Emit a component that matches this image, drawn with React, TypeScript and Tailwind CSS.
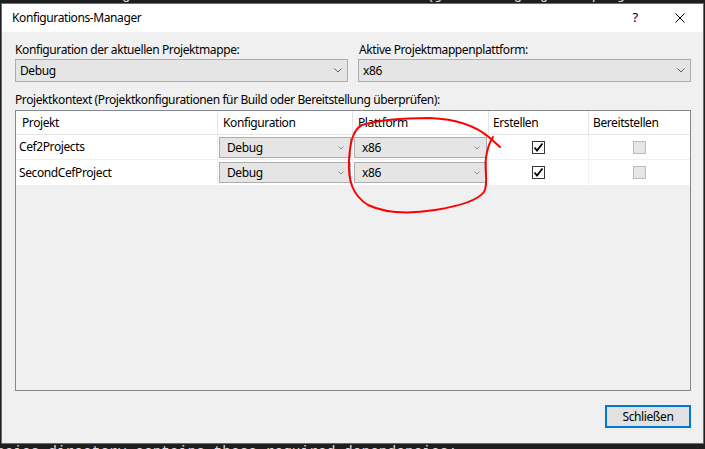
import React from "react";

const ui = { fontFamily: '"Noto Sans", "Open Sans", sans-serif', letterSpacing: "-0.4px" };
const mono = { fontFamily: '"Liberation Mono", "DejaVu Sans Mono", monospace', letterSpacing: "0px" };

function Chevron({ color = "#606060", w = 8 }: { color?: string; w?: number }) {
  return (
    <svg width={w} height={5} viewBox="0 0 8 5" className="shrink-0">
      <polyline points="0.5,0.5 4,4 7.5,0.5" fill="none" stroke={color} strokeWidth="1" />
    </svg>
  );
}

function Combo({ text, className }: { text: string; className?: string }) {
  return (
    <div
      className={
        "flex items-center justify-between border border-[#adadad] bg-[#e5e5e5] pl-[4px] pr-[5px] text-[12px] text-black " +
        (className ?? "")
      }
    >
      <span>{text}</span>
      <Chevron />
    </div>
  );
}

function RowCombo({ text }: { text: string }) {
  return (
    <div className="mx-[1px] my-[2px] flex h-[21px] items-center justify-between border border-[#adadad] bg-[#e5e5e5] pl-[7px] pr-[6px] text-[12px] text-black">
      <span>{text}</span>
      <svg width="6" height="4" viewBox="0 0 6 4">
        <polyline points="0.5,0.5 3,3 5.5,0.5" fill="none" stroke="#8a8a8a" strokeWidth="1" />
      </svg>
    </div>
  );
}

function Check({ checked, disabled }: { checked?: boolean; disabled?: boolean }) {
  return (
    <div
      className={
        "flex h-[13px] w-[13px] items-center justify-center border " +
        (disabled ? "border-[#bcbcbc] bg-[#e6e6e6]" : "border-[#333333] bg-white")
      }
    >
      {checked && (
        <svg width="11" height="11" viewBox="0 0 11 11">
          <polyline points="1.5,5.5 4,8.5 9.5,1.5" fill="none" stroke="#000" strokeWidth="1.8" />
        </svg>
      )}
    </div>
  );
}

function Row({ name, last }: { name: string; last?: boolean }) {
  return (
    <div className={"flex h-[25px] bg-white " + (last ? "" : "border-b border-[#f0f0f0]")}>
      <div className="flex w-[202px] items-center border-r border-[#f0f0f0] pl-[3px] text-[12px] text-black">
        {name}
      </div>
      <div className="w-[135px] border-r border-[#f0f0f0]">
        <RowCombo text="Debug" />
      </div>
      <div className="w-[136px] border-r border-[#f0f0f0]">
        <RowCombo text="x86" />
      </div>
      <div className="flex w-[100px] items-center justify-center border-r border-[#f0f0f0]">
        <Check checked />
      </div>
      <div className="flex flex-1 items-center justify-center">
        <Check disabled />
      </div>
    </div>
  );
}

export default function App() {
  return (
    <div className="relative h-[449px] w-[705px] overflow-hidden bg-[#1e1e1e]" style={ui}>
      <div className="h-[3px] overflow-hidden">
        <div className="-mt-[13px] whitespace-nowrap text-[14.5px] leading-[16px] text-[#dcdcdc]" style={mono}>
          r solution target architecture to "x86" or "x64" (just changing the project b
        </div>
      </div>
      <div className="ml-[1px] flex h-[441px] w-[703px] flex-col border border-[#1883d7] bg-[#f0f0f0]">
        <div className="flex h-[28px] items-center bg-white pl-[10px] text-[12px] text-black">
          <span className="flex-1">Konfigurations-Manager</span>
          <span className="w-[10px] text-center text-[13px]">?</span>
          <span className="ml-[35px] mr-[18px] flex w-[10px] items-center justify-center">
            <svg width="10" height="10" viewBox="0 0 10 10">
              <path d="M0.5 0.5 L9.5 9.5 M9.5 0.5 L0.5 9.5" stroke="#000" strokeWidth="1" />
            </svg>
          </span>
        </div>
        <div className="flex flex-1 flex-col pl-[13px] pr-[12px] pt-[10px] text-[12px] text-black">
          <div className="flex gap-[10px]">
            <div className="flex w-[333px] flex-col gap-[1px]">
              <div className="h-[16px] leading-[16px]">Konfiguration der aktuellen Projektmappe:</div>
              <Combo text="Debug" className="h-[23px]" />
            </div>
            <div className="flex flex-1 flex-col gap-[1px]">
              <div className="h-[16px] pl-[1px] leading-[16px]">Aktive Projektmappenplattform:</div>
              <Combo text="x86" className="h-[23px]" />
            </div>
          </div>
          <div className="mt-[10px] h-[16px] leading-[16px]">
            Projektkontext (Projektkonfigurationen für Build oder Bereitstellung überprüfen):
          </div>
          <div className="mt-[2px] flex h-[281px] flex-col border border-[#828790] bg-[#f0f0f0]">
            <div className="flex h-[24px] border-b border-[#e5e5e5] bg-white">
              <div className="flex w-[202px] items-center border-r border-[#e5e5e5] pl-[6px]">Projekt</div>
              <div className="flex w-[135px] items-center border-r border-[#e5e5e5] pl-[5px]">Konfiguration</div>
              <div className="flex w-[136px] items-center border-r border-[#e5e5e5] pl-[5px]">Plattform</div>
              <div className="flex w-[100px] items-center border-r border-[#e5e5e5] pl-[4px]">Erstellen</div>
              <div className="flex flex-1 items-center pl-[4px]">Bereitstellen</div>
            </div>
            <Row name="Cef2Projects" />
            <Row name="SecondCefProject" last />
          </div>
          <div className="mt-[14px] flex justify-end">
            <button className="flex h-[23px] w-[86px] items-center justify-center border-2 border-[#0078d7] bg-[#e1e1e1] text-[12px] text-black">
              Schließen
            </button>
          </div>
        </div>
      </div>
      <div className="h-[5px] overflow-hidden">
        <div className="-ml-[4px] whitespace-nowrap text-[14.5px] leading-[16px] text-[#dcdcdc]" style={mono}>
          ncies directory contains these required dependencies:
        </div>
      </div>
      <svg className="pointer-events-none absolute left-0 top-0" width="705" height="449">
        <path
          d="M 500 147 L 490 138 C 475 125, 455 119, 430 118 C 400 118, 375 121, 362 125 C 352 130, 350 145, 349 160 C 348 180, 352 195, 368 205 C 385 213, 410 214, 435 210 C 460 206, 478 200, 484 192 C 489 183, 484 170, 486 158 C 487 150, 489 143, 493 137"
          fill="none"
          stroke="#ff0000"
          strokeWidth="2"
          strokeLinecap="round"
          strokeLinejoin="round"
        />
      </svg>
    </div>
  );
}
